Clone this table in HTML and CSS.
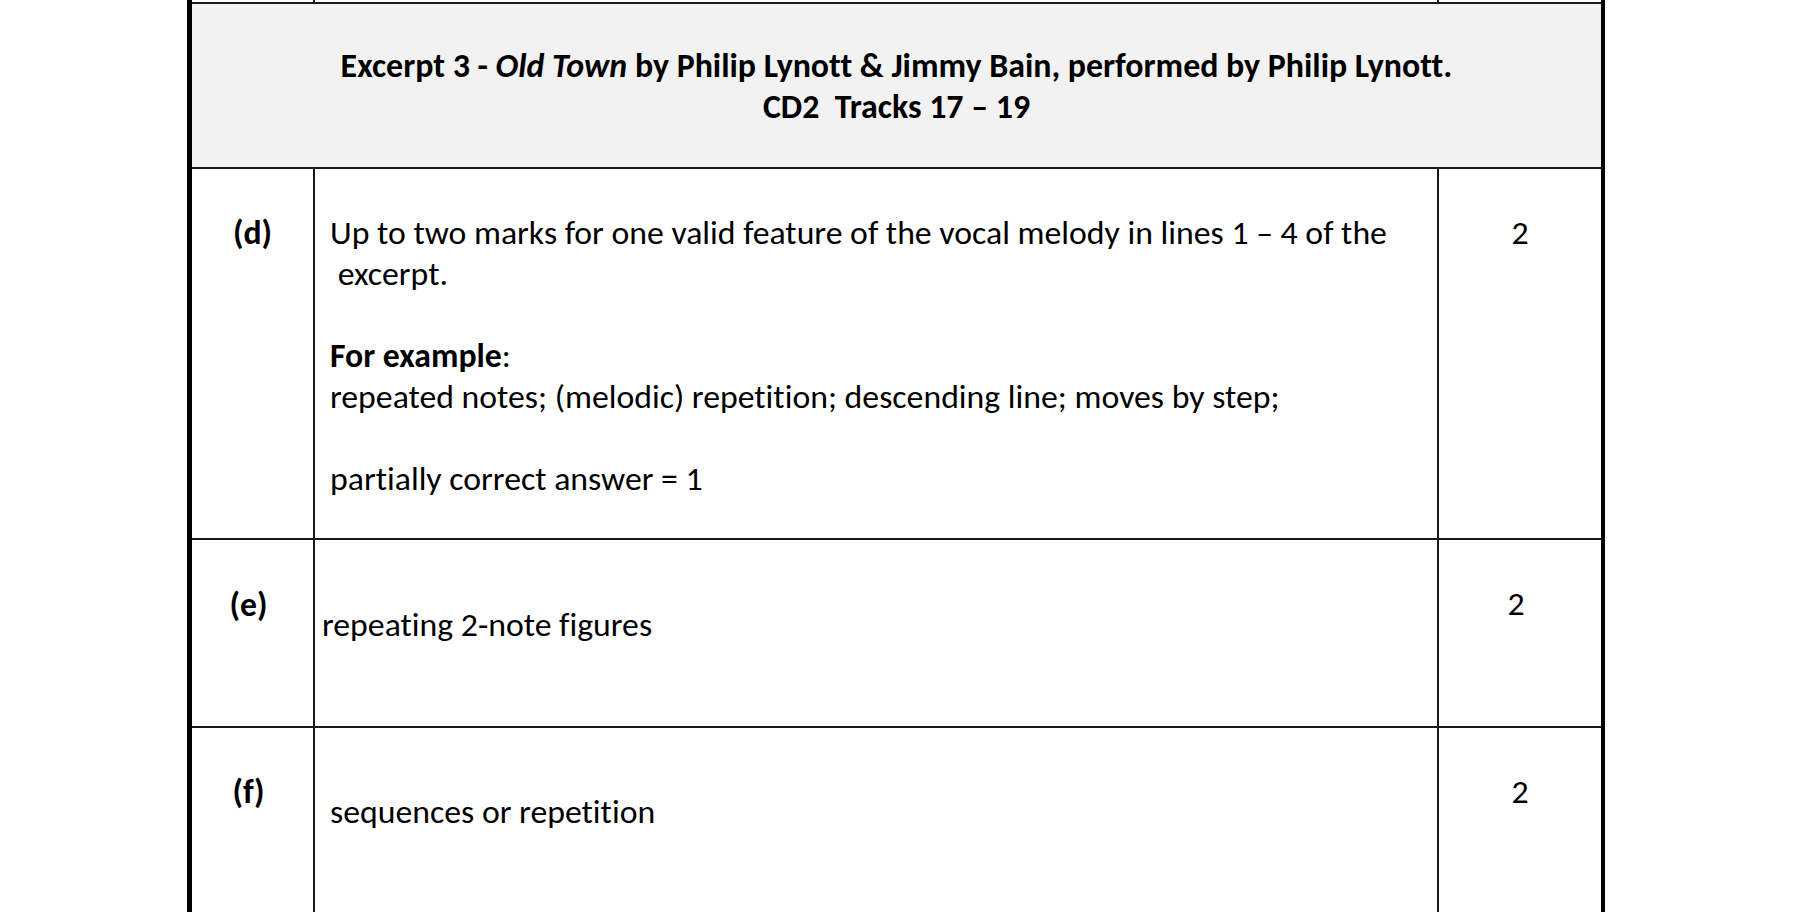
FILE: index.html
```html
<!DOCTYPE html>
<html lang="en">
<head>
<meta charset="utf-8">
<title>Mark scheme – Excerpt 3</title>
<link rel="stylesheet" href="styles.css">
</head>
<body>
<div class="sheet">
  <div class="row prev">
    <div class="edge"></div>
    <div class="edge"></div>
    <div class="edge"></div>
  </div>
  <div class="row head">
    <p class="title">Excerpt 3 - <em>Old Town</em> by Philip Lynott &amp; Jimmy Bain, performed by Philip Lynott.</p>
    <p class="title">CD2&nbsp; Tracks 17 – 19</p>
  </div>
  <div class="row q q-d">
    <div class="cell c1"><span class="label">(d)</span></div>
    <div class="cell c2">
      <p>Up to two marks for one valid feature of the vocal melody in lines 1 – 4 of the<br>&nbsp;excerpt.</p>
      <p class="gap"><strong>For example</strong>:<br>repeated notes; (melodic) repetition; descending line; moves by step;</p>
      <p class="gap">partially correct answer = 1</p>
    </div>
    <div class="cell c3"><span class="mark">2</span></div>
  </div>
  <div class="row q q-e">
    <div class="cell c1 shift"><span class="label">(e)</span></div>
    <div class="cell c2 low narrow"><p>repeating 2-note figures</p></div>
    <div class="cell c3 shift"><span class="mark">2</span></div>
  </div>
  <div class="row q q-f">
    <div class="cell c1 shift"><span class="label">(f)</span></div>
    <div class="cell c2 low"><p>sequences or repetition</p></div>
    <div class="cell c3"><span class="mark">2</span></div>
  </div>
</div>
</body>
</html>
```
FILE: styles.css
```css
html, body {
  margin: 0;
  padding: 0;
  background: #ffffff;
}

body {
  font-family: "Carlito", "Calibri", "Lato", sans-serif;
  font-size: 33.75px;
  color: #000;
  overflow: hidden;
  height: 912px;
  font-variant-ligatures: none;
}

.sheet {
  margin-left: 187px;
  width: 1409px;
  border-left: 5px solid #000;
  border-right: 4px solid #000;
}

.row {
  display: grid;
  grid-template-columns: 121px 1124px 164px;
}

.row + .row {
  border-top: 2px solid #1a1a1a;
}

.cell + .cell,
.edge + .edge {
  border-left: 2px solid #1a1a1a;
}

.prev {
  height: 2px;
  overflow: hidden;
}

.head {
  display: block;
  height: 165px;
  background: #f2f2f2;
  box-sizing: border-box;
  padding-top: 41px;
  text-align: center;
}

.title {
  margin: 0;
  font-size: 33.9px;
  font-weight: bold;
  line-height: 41px;
}

.title em {
  font-style: italic;
}

.q-d { height: 369px; }
.q-e { height: 186px; }
.q-f { height: 250px; }

.q .cell {
  box-sizing: border-box;
  line-height: 41px;
}

.c1 {
  text-align: center;
  padding-top: 43px;
  font-weight: bold;
}

.c2 {
  padding: 43px 10px 0 15px;
}

.c2 p {
  margin: 0;
}

.c2 p.gap {
  margin-top: 41px;
}

.c2.narrow {
  padding-left: 7px;
}

.c3 {
  text-align: center;
  padding-top: 43px;
}

.q-e .c1 { padding-top: 44px; }
.q-e .c2 { padding-top: 64px; }
.q-e .c3 { padding-top: 43px; }

.q-f .c1 { padding-top: 43px; }
.q-f .c2 { padding-top: 63px; }
.q-f .c3 { padding-top: 43px; }

.c1.shift,
.c3.shift {
  padding-right: 8px;
}
```
